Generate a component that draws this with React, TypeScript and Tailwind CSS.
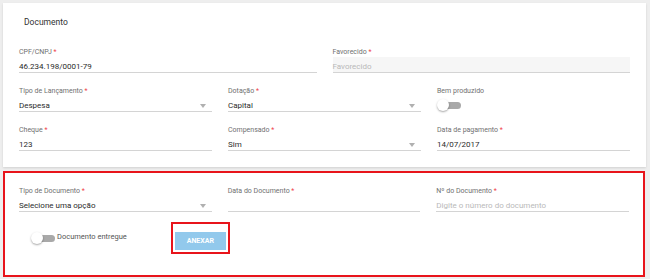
import React from "react";

const font = { fontFamily: "Roboto, 'Liberation Sans', sans-serif" };

function Label({ text, required }: { text: string; required?: boolean }) {
  return (
    <div className="h-[10px] leading-[10px] text-[7px] text-[#707070] whitespace-nowrap">
      {text}
      {required && <span className="text-[#f0434a]"> *</span>}
    </div>
  );
}

function Field({
  label,
  required,
  value,
  placeholder,
  select,
  disabled,
}: {
  label: string;
  required?: boolean;
  value?: string;
  placeholder?: string;
  select?: boolean;
  disabled?: boolean;
}) {
  return (
    <div className="flex-1 min-w-0">
      <Label text={label} required={required} />
      <div
        className={`h-[16px] pt-[4px] border-b border-[#d4d4d4] flex items-start justify-between ${
          disabled ? "bg-[#f6f6f6]" : ""
        }`}
      >
        <span
          className={`text-[8px] leading-[12px] whitespace-nowrap ${
            value ? "text-[#2b2b2b]" : "text-[#b9b9b9]"
          }`}
        >
          {value || placeholder}
        </span>
        {select && (
          <svg width="6" height="4" viewBox="0 0 6 4" className="mt-[4px] mr-[6px]">
            <path d="M0 0 L6 0 L3 4 Z" fill="#b0b0b0" />
          </svg>
        )}
      </div>
    </div>
  );
}

function Toggle() {
  return (
    <div className="relative w-[24px] h-[12px] flex items-center">
      <div className="absolute left-[3px] right-0 h-[7px] rounded-full bg-[#a9a9a9]" />
      <div className="absolute left-0 w-[12px] h-[12px] rounded-full bg-white shadow-[0_1px_2px_rgba(0,0,0,0.35)]" />
    </div>
  );
}

export default function App() {
  return (
    <div className="w-[650px] h-[279px] bg-[#eeeeee] px-[3px] pt-[3px] overflow-hidden" style={font}>
      <div className="w-[643px] h-[164px] bg-white shadow-[0_1px_2px_rgba(0,0,0,0.12)] px-4 pt-[10px]">
        <div className="h-[18px] leading-[18px] text-[8.5px] text-[#333333] pl-[5px]">Documento</div>
        <div className="mt-[16px] flex gap-4">
          <Field label="CPF/CNPJ" required value="46.234.198/0001-79" />
          <Field label="Favorecido" required placeholder="Favorecido" disabled />
        </div>
        <div className="mt-[13px] flex gap-4">
          <Field label="Tipo de Lançamento" required value="Despesa" select />
          <Field label="Dotação" required value="Capital" select />
          <div className="flex-1 min-w-0">
            <Label text="Bem produzido" />
            <div className="pt-[3px] pl-[0px]">
              <Toggle />
            </div>
          </div>
        </div>
        <div className="mt-[13px] flex gap-4">
          <Field label="Cheque" required value="123" />
          <Field label="Compensado" required value="Sim" select />
          <Field label="Data de pagamento" required value="14/07/2017" />
        </div>
      </div>
      <div className="mt-[4px] w-[642px] h-[106px] bg-white border-2 border-[#e8141b] px-[14px] pt-[13px]">
        <div className="flex gap-4">
          <Field label="Tipo de Documento" required value="Selecione uma opção" select />
          <Field label="Data do Documento" required />
          <Field label="Nº do Documento" required placeholder="Digite o número do documento" />
        </div>
        <div className="mt-[10px] flex items-center">
          <div className="ml-[12px] flex items-center">
            <Toggle />
            <span className="ml-[2px] text-[7.5px] text-[#555555] leading-[10px] -mt-[2px]">Documento entregue</span>
          </div>
          <div className="ml-[44px] border-2 border-[#e8141b] p-[2px]">
            <button className="w-[51px] h-[18px] bg-[#92c9ec] text-white text-[7px] font-bold leading-[18px]">
              ANEXAR
            </button>
          </div>
        </div>
      </div>
    </div>
  );
}
